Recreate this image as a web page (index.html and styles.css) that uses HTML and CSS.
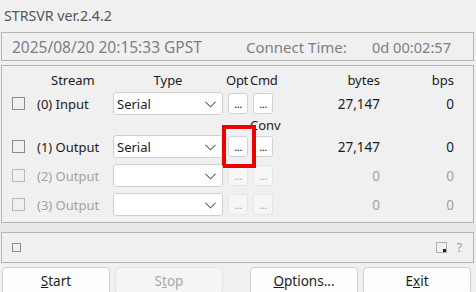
FILE: index.html
```html
<!DOCTYPE html>
<html>
<head>
<meta charset="utf-8">
<link rel="stylesheet" href="styles.css">
</head>
<body>
<div class="title">STRSVR ver.2.4.2</div>
<div class="status">
  <span class="s-date">2025/08/20 20:15:33 GPST</span>
  <span class="s-label">Connect Time:</span>
  <span class="s-time">0d 00:02:57</span>
</div>
<div class="panel">
  <div class="grid head">
    <span></span>
    <span class="h-stream">Stream</span>
    <span class="h-type">Type</span>
    <span class="h-opt">Opt</span>
    <span class="h-cmd">Cmd</span>
    <span class="num">bytes</span>
    <span class="num">bps</span>
  </div>
  <div class="grid row">
    <span class="cb"></span>
    <span class="lbl">(0) Input</span>
    <span class="sel">Serial<svg class="chev" width="11" height="7" viewBox="0 0 11 7"><path d="M0.5 0.8 L5.5 5.8 L10.5 0.8" fill="none" stroke="#606060" stroke-width="1.1"/></svg></span>
    <span class="btn">...</span>
    <span class="btn">...</span>
    <span class="num">27,147</span>
    <span class="num">0</span>
  </div>
  <div class="grid conv"><span class="conv-lbl">Conv</span></div>
  <div class="grid row">
    <span class="cb"></span>
    <span class="lbl">(1) Output</span>
    <span class="sel">Serial<svg class="chev" width="11" height="7" viewBox="0 0 11 7"><path d="M0.5 0.8 L5.5 5.8 L10.5 0.8" fill="none" stroke="#606060" stroke-width="1.1"/></svg></span>
    <span class="btn mark">...<span class="redbox"></span></span>
    <span class="btn">...</span>
    <span class="num">27,147</span>
    <span class="num">0</span>
  </div>
  <div class="grid row off">
    <span class="cb"></span>
    <span class="lbl">(2) Output</span>
    <span class="sel"><svg class="chev" width="11" height="7" viewBox="0 0 11 7"><path d="M0.5 0.8 L5.5 5.8 L10.5 0.8" fill="none" stroke="#606060" stroke-width="1.1"/></svg></span>
    <span class="btn">...</span>
    <span class="btn">...</span>
    <span class="num">0</span>
    <span class="num">0</span>
  </div>
  <div class="grid row off">
    <span class="cb"></span>
    <span class="lbl">(3) Output</span>
    <span class="sel"><svg class="chev" width="11" height="7" viewBox="0 0 11 7"><path d="M0.5 0.8 L5.5 5.8 L10.5 0.8" fill="none" stroke="#606060" stroke-width="1.1"/></svg></span>
    <span class="btn">...</span>
    <span class="btn">...</span>
    <span class="num">0</span>
    <span class="num">0</span>
  </div>
</div>
<div class="strip"></div>
<div class="bottom">
  <span class="small-cb"></span>
  <span class="right-icons">
    <svg width="11" height="11" viewBox="0 0 11 11"><rect x="0.5" y="0.5" width="10" height="10" fill="none" stroke="#707070" stroke-dasharray="1 1"/><rect x="7" y="7" width="3" height="3" fill="#202020"/></svg>
    <span class="q">?</span>
  </span>
</div>
<div class="buttons">
  <span class="pb"><u>S</u>tart</span>
  <span class="pb dis">S<u>t</u>op</span>
  <span class="spacer"></span>
  <span class="pb"><u>O</u>ptions...</span>
  <span class="pb">E<u>x</u>it</span>
</div>
</body>
</html>
```

FILE: styles.css
```css
html, body {
  margin: 0;
  padding: 0;
}
body {
  width: 476px;
  height: 292px;
  overflow: hidden;
  background: #f0f0f0;
  font-family: "Noto Sans", "Open Sans", sans-serif;
  font-size: 13px;
  color: #1c1c1c;
}
.title {
  height: 32px;
  line-height: 32px;
  padding-left: 4px;
  font-size: 14.2px;
  color: #555555;
}
.status {
  margin: 0 2px 0 1px;
  height: 27px;
  border: 1px solid #b4b4b4;
  display: flex;
  align-items: center;
  padding-left: 10px;
  font-size: 15.5px;
  color: #7e7e86;
}
.s-date { width: 234px; }
.s-label { width: 126px; font-size: 15px; }
.s-time { font-size: 14.6px; }
.panel {
  margin: 4px 2px 0 1px;
  border: 1px solid #b4b4b4;
  padding: 3px 0 0 9px;
  box-sizing: border-box;
  height: 158px;
}
.grid {
  display: grid;
  grid-template-columns: 26px 76px 110px 25px 25px 107px 74px;
  align-items: center;
}
.head {
  height: 21px;
  margin-bottom: 2px;
}
.h-stream { padding-left: 14px; }
.h-type { text-align: center; }
.h-opt { justify-self: end; margin-right: 0px; letter-spacing: -0.3px; }
.h-cmd { justify-self: start; margin-left: 2px; letter-spacing: -0.3px; }
.num { text-align: right; }
.row .num { font-size: 13.5px; }
.row {
  height: 23px;
  margin-bottom: 6px;
}
.conv {
  height: 20px;
  margin-top: -6px;
}
.conv-lbl {
  grid-column: 5 / 7;
  padding-left: 2px;
  line-height: 20px;
}
.cb {
  width: 11px;
  height: 11px;
  border: 1px solid #8c8c8c;
  margin-left: 1px;
}
.sel {
  height: 23px;
  box-sizing: border-box;
  border: 1px solid #cfcfcf;
  border-radius: 3px;
  background: #ffffff;
  display: flex;
  align-items: center;
  padding-left: 3px;
  position: relative;
}
.chev {
  position: absolute;
  right: 6px;
  top: 8px;
}
.btn {
  justify-self: end;
  width: 20px;
  height: 21px;
  box-sizing: border-box;
  border: 1px solid #d2d2d2;
  border-radius: 3px;
  background: #ffffff;
  font-size: 11.5px;
  text-align: center;
  line-height: 20px;
  letter-spacing: -0.6px;
  color: #222;
}
.mark { position: relative; }
.redbox {
  position: absolute;
  left: -7px;
  top: -12px;
  width: 34px;
  height: 43px;
  box-sizing: border-box;
  border: 4px solid #ee0000;
}
.off .lbl, .off .num { color: #a2a2a8; }
.off .cb { border-color: #b8b8b8; }
.off .btn {
  background: #f6f6f6;
  border-color: #e6e6e6;
  color: #b0b0b0;
}
.strip {
  height: 9px;
  background: #e9e9e9;
}
.bottom {
  margin: 0 2px 0 1px;
  height: 29px;
  border: 1px solid #b4b4b4;
  display: flex;
  align-items: center;
  justify-content: space-between;
  padding: 0 10px 0 10px;
}
.small-cb {
  width: 7px;
  height: 7px;
  border: 1px solid #8c8c8c;
}
.right-icons {
  display: flex;
  align-items: center;
  gap: 10px;
  margin-right: 1px;
}
.q {
  color: #9a9a9a;
  font-size: 12px;
}
.buttons {
  display: flex;
  gap: 5px;
  padding: 4px 3px 0 2px;
}
.spacer { width: 17px; }
.pb {
  width: 108px;
  height: 28px;
  box-sizing: border-box;
  border: 1px solid #d0d0d0;
  border-radius: 4px;
  background: #fdfdfd;
  text-align: center;
  line-height: 26px;
  font-size: 13.5px;
  color: #1c1c1c;
}
.pb.dis {
  background: #f5f5f5;
  border-color: #e4e4e4;
  color: #a8a8a8;
}
```
